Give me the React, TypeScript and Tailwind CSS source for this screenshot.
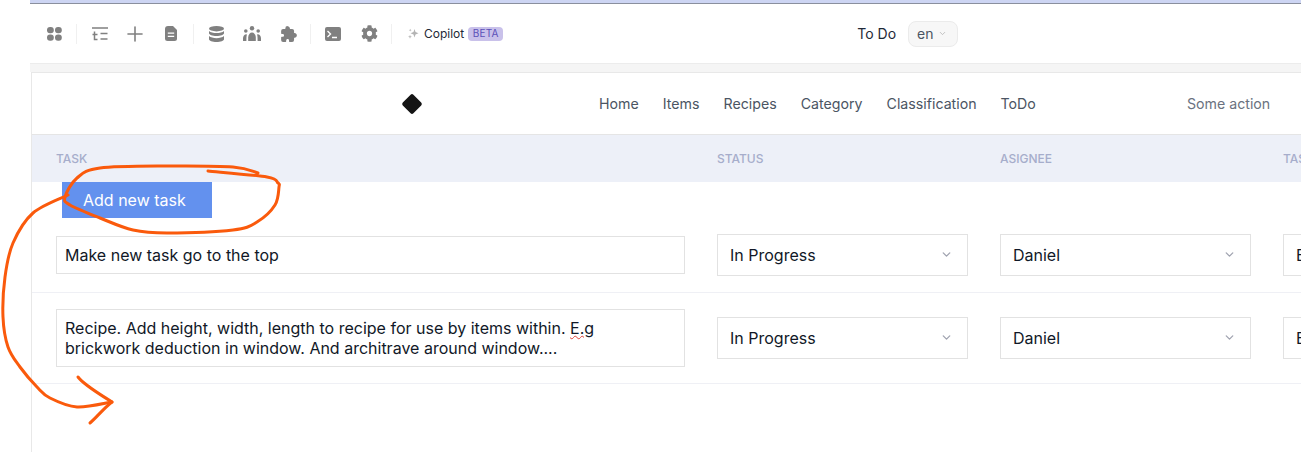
import React from "react";
import { Plus, ChevronDown } from "lucide-react";
import { FaCog } from "react-icons/fa";
import { IoExtensionPuzzle } from "react-icons/io5";

const Sep = () => <div className="w-px h-[20px] shrink-0 bg-[#f0f0f0]" />;

const Grid = () => (
  <svg width="15" height="14" viewBox="0 0 15 14" fill="#808080">
    <rect x="0" y="0" width="6.8" height="6.2" rx="3" />
    <rect x="8" y="0" width="6.8" height="6.2" rx="3" />
    <rect x="0" y="7.6" width="6.8" height="6.2" rx="3" />
    <rect x="8" y="7.6" width="6.8" height="6.2" rx="3" />
  </svg>
);
const Tree = () => (
  <svg width="16" height="14" viewBox="0 0 16 14" fill="none" stroke="#808080" strokeWidth="1.5">
    <path d="M0 1h16M2.500 4.500v8h3M0.500 7.500h5M8.500 6.500h7M8.500 12h7" />
  </svg>
);
const Doc = () => (
  <svg width="12" height="15" viewBox="0 0 12 15">
    <path d="M3 0h5l4 4v8.500a2.500 2.500 0 0 1-2.500 2.500h-7A2.500 2.500 0 0 1 0 12.500V3a3 3 0 0 1 3-3z" fill="#808080" />
    <path d="M2.800 7.200h6.400M2.800 10.300h6.400" stroke="#fff" strokeWidth="1.300" />
  </svg>
);
const Db = () => (
  <svg width="15" height="16" viewBox="0 0 15 16" fill="#808080">
    <ellipse cx="7.500" cy="2.700" rx="7.500" ry="2.700" />
    <path d="M0 5c1.500 1.500 4.500 2.100 7.500 2.100S13.500 6.500 15 5v2.200c0 1.500-3.400 2.700-7.500 2.700S0 8.700 0 7.200z" />
    <path d="M0 10.100c1.500 1.500 4.500 2.100 7.500 2.100s6-.6 7.500-2.100v3.200c0 1.500-3.400 2.700-7.500 2.700S0 14.800 0 13.300z" />
  </svg>
);
const People = () => (
  <svg width="18" height="15" viewBox="0 0 18 15" fill="#808080">
    <circle cx="9" cy="2.200" r="2.200" />
    <circle cx="2.800" cy="5" r="1.800" />
    <circle cx="15.200" cy="5" r="1.800" />
    <path d="M5.200 15v-3.500C5.200 8.500 7 6.500 9 6.500s3.800 2 3.800 5V15z" />
    <path d="M0 15v-2.500C0 10.500 1 8.500 3 8.200 3.600 8.100 4 8.400 3.800 9c-.4 1.500-.4 4-.4 6z" />
    <path d="M18 15v-2.500c0-2-1-4-3-4.300-.6-.1-1 .2-.8.800.4 1.500.4 4 .4 6z" />
  </svg>
);
const Term = () => (
  <svg width="16" height="14" viewBox="0 0 16 14">
    <rect width="16" height="14" rx="2" fill="#808080" />
    <path d="M2.500 4l3 3-3 3M7 10.500h5" stroke="#fff" strokeWidth="1.400" fill="none" />
  </svg>
);
const Sparkle = () => (
  <svg width="11" height="11" viewBox="0 0 11 11" fill="#b4b4b4">
    <path d="M6.500 1l1 3 3 1.200-3 1.200-1 3.100-1-3.100-3-1.200 3-1.200z" />
    <path d="M2 6.800l.5 1.400 1.400.5-1.400.5L2 10.700l-.5-1.500L0 8.700l1.500-.5z" />
    <path d="M2.200 .8l.4 1 1 .4-1 .4-.4 1-.4-1-1-.4 1-.4z" />
  </svg>
);

const Select = ({ value }: { value: string }) => (
  <div className="h-[42px] w-[251px] shrink-0 border border-[#e2e2e2] flex items-center justify-between pl-[12px] pr-[14px] text-[16px] text-[#111827] bg-white">
    <span>{value}</span>
    <ChevronDown size={13} strokeWidth={2.4} color="#a0a3b0" className="mt-[-2px]" />
  </div>
);

const Row = ({ children }: { children: React.ReactNode }) => (
  <div className="grid grid-cols-[629px_251px_251px_251px] gap-x-[32px] pl-[24px] py-[16px] items-center border-b border-[#eff0f5] w-[1400px]">
    {children}
  </div>
);

const Selects = () => (
  <>
    <Select value="In Progress" />
    <Select value="Daniel" />
    <Select value="Estimate" />
  </>
);

// Smooth freehand stroke through the given points (Catmull-Rom to Bezier).
const smooth = (p: number[][]) => {
  let d = `M${p[0][0]} ${p[0][1]}`;
  for (let i = 0; i < p.length - 1; i++) {
    const a = p[Math.max(i - 1, 0)];
    const b = p[i];
    const c = p[i + 1];
    const e = p[Math.min(i + 2, p.length - 1)];
    d += `C${b[0] + (c[0] - a[0]) / 6} ${b[1] + (c[1] - a[1]) / 6} ${c[0] - (e[0] - b[0]) / 6} ${c[1] - (e[1] - b[1]) / 6} ${c[0]} ${c[1]}`;
  }
  return d;
};

const loop = smooth([[258, 173], [233, 167], [167, 166], [100, 168], [77, 178], [65, 197], [70, 205], [100, 218], [133, 230], [167, 233], [233, 230], [257, 222], [275, 205], [279, 187], [278, 183], [267, 177], [208, 171]]);
const curve = smooth([[68, 195], [33, 213], [13, 243], [5, 277], [3, 317], [8, 347], [20, 367], [37, 387], [50, 398], [77, 407], [112, 402]]);

export default function App() {
  return (
    <div className="w-[1301px] h-[452px] overflow-hidden bg-white flex relative font-['Inter',sans-serif]">
      <div className="w-[30px] shrink-0" />
      <div className="flex-1 min-w-0 flex flex-col">
        <div className="h-[4px] shrink-0 bg-[#cdd5f3] border-b border-[#8a8f9e]" />
        <div className="h-[60px] shrink-0 flex items-center border-b border-[#ececec] relative">
          <div className="shrink-0 flex justify-center w-[46px] pl-[2px]"><Grid /></div>
          <Sep />
          <div className="shrink-0 flex justify-center w-[46px]"><Tree /></div>
          <div className="shrink-0 flex justify-center w-[24px]"><Plus size={24} color="#808080" strokeWidth={1.6} /></div>
          <div className="shrink-0 flex justify-center w-[46px] pl-[2px]"><Doc /></div>
          <Sep />
          <div className="shrink-0 flex justify-center w-[44px]"><Db /></div>
          <div className="shrink-0 flex justify-center w-[28px]"><People /></div>
          <div className="shrink-0 flex justify-center w-[44px] pl-[2px]"><IoExtensionPuzzle size={18} color="#808080" /></div>
          <Sep />
          <div className="shrink-0 flex justify-center w-[44px]"><Term /></div>
          <div className="shrink-0 flex justify-center w-[28px]"><FaCog size={17} color="#808080" /></div>
          <div className="shrink-0 w-[8px]" />
          <Sep />
          <div className="ml-[16px] flex items-center shrink-0">
            <Sparkle />
            <span className="ml-[5px] text-[12px] text-[#1f2937]">Copilot</span>
            <span className="ml-[4px] h-[14px] w-[35px] rounded-[4px] bg-[#c9c1ea] text-[#5b50b8] text-[10px] flex items-center justify-center tracking-[0.2px]">BETA</span>
          </div>
          <span className="ml-[354px] text-[14px] text-[#1f2937]">To Do</span>
          <div className="ml-[12px] h-[26px] w-[50px] rounded-[8px] border border-[#ebebeb] bg-[#f7f7f7] flex items-center pl-[8px] text-[14px] text-[#4b5563]">
            en
            <ChevronDown size={9} className="ml-[5px]" color="#b0b0b0" />
          </div>
        </div>
        <div className="h-[8px] shrink-0 bg-[#f5f5f5]" />
        <div className="flex-1 min-h-0 bg-white border-l border-t border-[#e8e8e8] ml-[1px] flex flex-col overflow-hidden">
          <div className="h-[62px] shrink-0 flex items-center border-b border-[#e5e5e5] text-[14.2px] text-[#4b5563]">
            <svg className="ml-[369px]" width="22" height="22" viewBox="0 0 22 22">
              <rect x="3.500" y="3.500" width="15" height="15" rx="2" fill="#151515" transform="rotate(45 11 11)" />
            </svg>
            <nav className="ml-[176px] flex gap-[24px]">
              <span>Home</span>
              <span>Items</span>
              <span>Recipes</span>
              <span>Category</span>
              <span>Classification</span>
              <span>ToDo</span>
            </nav>
            <span className="ml-[151px] text-[#6b7280]">Some action</span>
          </div>
          <div className="h-[47px] shrink-0 bg-[#edf0f8] grid grid-cols-[629px_251px_251px_251px] gap-x-[32px] pl-[24px] items-center text-[12px] font-medium text-[#a6adcb] w-[1400px]">
            <span>TASK</span>
            <span>STATUS</span>
            <span>ASIGNEE</span>
            <span>TASK TYPE</span>
          </div>
          <button className="ml-[30px] w-[150px] h-[36px] shrink-0 bg-[#6391ee] text-white text-[16px] text-left pl-[21px]">Add new task</button>
          <Row>
            <div className="h-[38px] border border-[#e2e2e2] flex items-center pl-[8px] text-[16px] text-[#111827]">Make new task go to the top</div>
            <Selects />
          </Row>
          <Row>
            <div className="h-[58px] border border-[#e2e2e2] flex items-center pl-[8px] text-[16px] leading-[20px] text-[#111827]">
              <span>
                Recipe. Add height, width, length to recipe for use by items within.{" "}
                <span className="underline decoration-wavy decoration-[#e0433a] decoration-1">E.g</span>
                <br />
                brickwork deduction in window. And architrave around window....
              </span>
            </div>
            <Selects />
          </Row>
        </div>
      </div>
      <svg className="absolute left-0 top-0 pointer-events-none" width="1301" height="452" viewBox="0 0 1301 452" fill="none" stroke="#fa5a0c" strokeWidth="3" strokeLinecap="round" strokeLinejoin="round">
        <path d={loop} />
        <path d={curve} />
        <path d="M78 377C84 385 98 393 112 402C104 408 97 417 90 423" />
      </svg>
    </div>
  );
}
